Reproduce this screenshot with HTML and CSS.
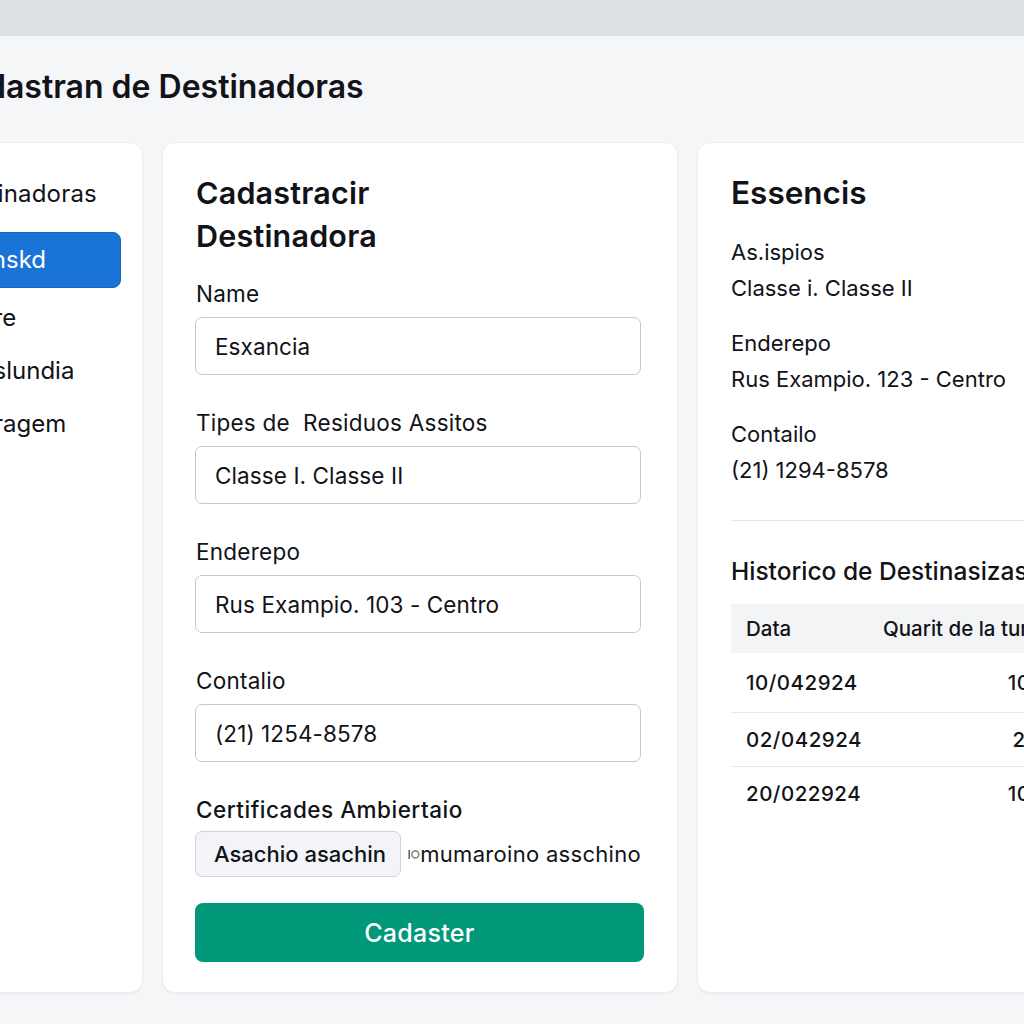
FILE: index.html
```html
<!DOCTYPE html>
<html lang="pt">
<head>
<meta charset="utf-8">
<title>Cadastran de Destinadoras</title>
<link rel="stylesheet" href="styles.css">
</head>
<body>
<div class="topbar"></div>
<main class="page">
  <h1 class="page-title">Cadastran de Destinadoras</h1>
  <div class="columns">
    <aside class="card sidebar">
      <div class="side-title">Destinadoras</div>
      <nav class="side-nav">
        <a class="side-item active">Danskd</a>
        <a class="side-item">Ubre</a>
        <a class="side-item">Ouslundia</a>
        <a class="side-item">Obragem</a>
      </nav>
    </aside>

    <section class="card form-card">
      <h2 class="form-title">Cadastracir<br>Destinadora</h2>
      <div class="field">
        <label class="label">Name</label>
        <div class="input">Esxancia</div>
      </div>
      <div class="field">
        <label class="label">Tipes de&nbsp; Residuos Assitos</label>
        <div class="input">Classe I. Classe II</div>
      </div>
      <div class="field">
        <label class="label">Enderepo</label>
        <div class="input">Rus Exampio. 103 - Centro</div>
      </div>
      <div class="field">
        <label class="label">Contalio</label>
        <div class="input">(21) 1254-8578</div>
      </div>
      <div class="field file-field">
        <label class="label strong">Certificades Ambiertaio</label>
        <div class="file-row">
          <span class="file-btn">Asachio asachin</span>
          <svg class="file-icon" width="15" height="16" viewBox="0 0 15 16"><rect x="0.5" y="3" width="2" height="11" fill="#5f6570"/><circle cx="9" cy="8.5" r="4.3" fill="none" stroke="#8c929c" stroke-width="2.2"/></svg>
          <span class="file-name">mumaroino asschino</span>
        </div>
      </div>
      <button class="submit">Cadaster</button>
    </section>

    <section class="card detail-card">
      <h2 class="detail-title">Essencis</h2>
      <dl class="details">
        <div class="detail-group">
          <dt>As.ispios</dt>
          <dd>Classe i. Classe II</dd>
        </div>
        <div class="detail-group">
          <dt>Enderepo</dt>
          <dd>Rus Exampio. 123 - Centro</dd>
        </div>
        <div class="detail-group">
          <dt>Contailo</dt>
          <dd>(21) 1294-8578</dd>
        </div>
      </dl>
      <hr class="divider">
      <h3 class="history-title">Historico de Destinasizas</h3>
      <table class="history">
        <thead>
          <tr><th class="c1">Data</th><th class="c2">Quarit de la turaçao</th></tr>
        </thead>
        <tbody>
          <tr class="first"><td class="c1">10/042924</td><td class="c2"><span class="qty">10</span> t</td></tr>
          <tr><td class="c1">02/042924</td><td class="c2"><span class="qty">2</span> t</td></tr>
          <tr><td class="c1">20/022924</td><td class="c2"><span class="qty">10</span> t</td></tr>
        </tbody>
      </table>
    </section>
  </div>
</main>
</body>
</html>
```

FILE: styles.css
```css
* { box-sizing: border-box; }
html, body {
  margin: 0;
  padding: 0;
  width: 1024px;
  height: 1024px;
  overflow: hidden;
  background: #f5f6f8;
  font-family: Inter, "Noto Sans", "Liberation Sans", sans-serif;
  color: #111318;
}
.topbar {
  height: 36px;
  background: #dde0e5;
}
.page {
  margin-left: -56px;
  padding-top: 31px;
  width: 1200px;
}
.page-title {
  margin: 0 0 35px 0;
  font-size: 32px;
  line-height: 40px;
  font-weight: 600;
  letter-spacing: 0;
  white-space: nowrap;
}
.columns {
  display: flex;
  gap: 19px;
  align-items: flex-start;
}
.card {
  background: #ffffff;
  border-radius: 13px;
  border: 1px solid #eceef1;
  box-shadow: 0 1px 2px rgba(15, 23, 42, 0.05);
  height: 851px;
  flex: none;
}
/* Sidebar */
.sidebar {
  width: 199px;
  padding: 36px 21px 20px 0;
}
.side-title {
  font-size: 24px;
  line-height: 30px;
  font-weight: 400;
  letter-spacing: 0.2px;
  margin-bottom: 23px;
  white-space: nowrap;
}
.side-nav {
  display: flex;
  flex-direction: column;
}
.side-item {
  display: block;
  font-size: 24px;
  line-height: 30px;
  padding: 12px 14px 11px 16px;
  color: #111318;
  white-space: nowrap;
}
.side-item.active {
  background: #1a73d6;
  color: #ffffff;
  border-radius: 8px;
  border: 1px solid #1664c0;
  height: 56px;
  padding-top: 12px;
  padding-left: 15px;
  margin-bottom: 3px;
}
/* Form */
.form-card {
  width: 516px;
  padding: 28px 36px 30px 32px;
}
.form-title {
  margin: 0 0 23px 1px;
  font-size: 30.5px;
  line-height: 43px;
  font-weight: 600;
  letter-spacing: 0.2px;
}
.field {
  margin-bottom: 34px;
}
.label {
  display: block;
  font-size: 22.5px;
  line-height: 28px;
  letter-spacing: 0.25px;
  margin: 0 0 9px 1px;
  white-space: nowrap;
}
.label.strong {
  font-weight: 500;
  letter-spacing: 0.5px;
}
.input {
  height: 58px;
  border: 1.5px solid #c4c8d0;
  border-radius: 7px;
  padding: 0 19px;
  display: flex;
  align-items: center;
  font-size: 22.5px;
  letter-spacing: 0.1px;
  background: #ffffff;
}
.file-field { margin-bottom: 26px; }
.file-row {
  display: flex;
  align-items: center;
  margin-top: -2px;
}
.file-btn {
  height: 46px;
  width: 206px;
  display: flex;
  align-items: center;
  padding: 0 18px;
  background: #f3f4f7;
  border: 1.5px solid #cfd3da;
  border-radius: 7px;
  font-size: 22px;
  font-weight: 500;
  letter-spacing: 0;
  white-space: nowrap;
}
.file-icon {
  margin-left: 7px;
}
.file-name {
  font-size: 22px;
  letter-spacing: 0.3px;
  white-space: nowrap;
}
.submit {
  display: block;
  width: 449px;
  height: 59px;
  background: #009879;
  color: #ffffff;
  border: none;
  border-radius: 8px;
  font-family: inherit;
  font-size: 25px;
  font-weight: 500;
  letter-spacing: 0.3px;
}
/* Detail */
.detail-card {
  width: 440px;
  padding: 29px 0 20px 33px;
}
.detail-title {
  margin: 0 0 20px 0;
  font-size: 31.5px;
  line-height: 42px;
  font-weight: 600;
}
.details {
  margin: 0;
}
.detail-group {
  margin-bottom: 19px;
}
.details dt, .details dd {
  margin: 0;
  font-size: 22px;
  line-height: 36px;
  white-space: nowrap;
}
.divider {
  border: none;
  border-top: 1.5px solid #e4e6ea;
  margin: 32px 0 34px 0;
}
.history-title {
  margin: 0 0 17px 0;
  font-size: 24.5px;
  line-height: 32px;
  font-weight: 500;
  white-space: nowrap;
}
.history {
  border-collapse: collapse;
  width: 420px;
  font-size: 20.5px;
}
.history th {
  background: #f3f4f6;
  height: 49px;
  font-weight: 500;
  text-align: left;
  white-space: nowrap;
}
.history td {
  height: 54px;
  border-bottom: 1.5px solid #e6e8eb;
  font-weight: 500;
  letter-spacing: 0.5px;
}
.history tr.first td { height: 59px; }
.history tr:last-child td { border-bottom: none; }
.history .c1 {
  width: 140px;
  padding-left: 15px;
}
.history .c2 {
  padding-left: 12px;
  white-space: nowrap;
}
.history td.c2 {
  padding-left: 133px;
}
.qty {
  display: inline-block;
  width: 30px;
  text-align: center;
}
```
